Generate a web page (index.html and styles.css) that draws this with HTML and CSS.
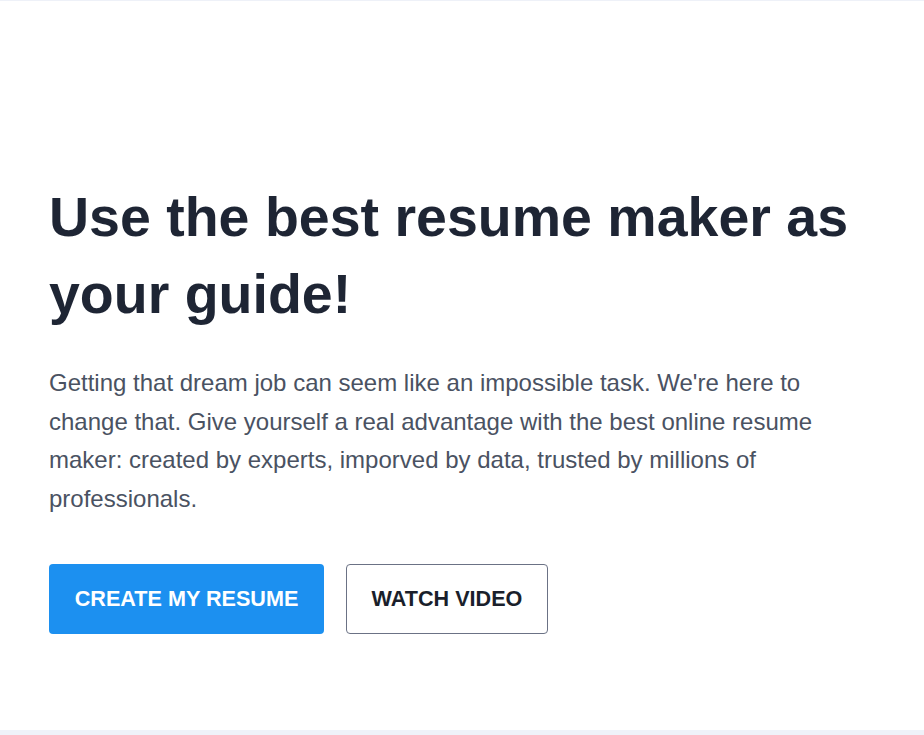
FILE: index.html
```html
<!DOCTYPE html>
<html lang="en">
<head>
<meta charset="utf-8">
<title>Resume maker</title>
<link rel="stylesheet" href="styles.css">
</head>
<body>
<section class="hero">
  <div class="hero-inner">
    <h1 class="hero-title">Use the best resume maker as your guide!</h1>
    <p class="hero-text">Getting that dream job can seem like an impossible task. We're here to change that. Give yourself a real advantage with the best online resume maker: created by experts, imporved by data, trusted by millions of professionals.</p>
    <div class="hero-actions">
      <a class="btn btn-primary" href="#">CREATE MY RESUME</a>
      <a class="btn btn-outline" href="#">WATCH VIDEO</a>
    </div>
  </div>
</section>
<section class="next"></section>
</body>
</html>
```
FILE: styles.css
```css
html, body {
  margin: 0;
  padding: 0;
  background: #ffffff;
}
body {
  font-family: "Liberation Sans", Arial, sans-serif;
  overflow: hidden;
}
.hero {
  border-top: 1px solid #eef1f8;
  height: 730px;
  box-sizing: border-box;
  padding: 178px 49px 0 49px;
}
.hero-title {
  margin: 0;
  font-size: 55.5px;
  line-height: 77px;
  font-weight: 700;
  color: #1e2534;
}
.hero-text {
  margin: 31px 0 0;
  font-size: 24px;
  line-height: 38.5px;
  color: #4a5262;
}
.hero-actions {
  display: flex;
  gap: 22px;
  margin-top: 46px;
}
.btn {
  display: flex;
  align-items: center;
  justify-content: center;
  height: 70px;
  box-sizing: border-box;
  border-radius: 4px;
  font-size: 21.6px;
  font-weight: 700;
  text-decoration: none;
}
.btn-primary {
  width: 275px;
  background: #1c90f0;
  color: #ffffff;
}
.btn-outline {
  width: 202px;
  border: 1px solid #6b7285;
  color: #1a1f2b;
  background: #ffffff;
}
.next {
  height: 20px;
  background: #eff2f9;
}
```
